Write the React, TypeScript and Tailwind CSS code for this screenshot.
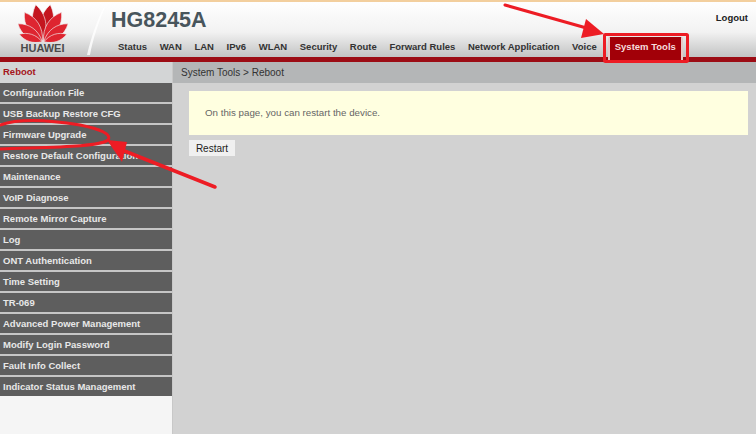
import React from "react";

const tabs = ["Status", "WAN", "LAN", "IPv6", "WLAN", "Security", "Route", "Forward Rules", "Network Application", "Voice"];

const menu = [
  "Configuration File",
  "USB Backup Restore CFG",
  "Firmware Upgrade",
  "Restore Default Configuration",
  "Maintenance",
  "VoIP Diagnose",
  "Remote Mirror Capture",
  "Log",
  "ONT Authentication",
  "Time Setting",
  "TR-069",
  "Advanced Power Management",
  "Modify Login Password",
  "Fault Info Collect",
  "Indicator Status Management",
];

const petals = [
  { a: 11, l: 38, w: 8.5 },
  { a: 32, l: 35, w: 8 },
  { a: 54, l: 31, w: 7 },
  { a: 72, l: 25, w: 5 },
];

const HuaweiLogo = () => (
  <svg width="50" height="39" viewBox="-25 -39 50 39">
    {petals.flatMap((p) =>
      [1, -1].map((s) => (
        <path
          key={p.a * s}
          d={`M0 -1 C${-p.w} ${-p.l * 0.35} ${-p.w} ${-p.l * 0.7} 0 ${-p.l} C${p.w} ${-p.l * 0.7} ${p.w} ${-p.l * 0.35} 0 -1 Z`}
          fill={p.a === 11 ? "#c4161f" : "#de2530"}
          stroke="#f0f0f0"
          strokeWidth="0.6"
          transform={`rotate(${p.a * s})`}
        />
      ))
    )}
  </svg>
);

export default function App() {
  return (
    <div className="relative w-[756px] h-[434px] overflow-hidden bg-[#d2d2d2] font-['Liberation_Sans',Arial,sans-serif]">
      <header className="relative h-[62px] flex flex-col border-t-2 border-[#f3cf9e] bg-gradient-to-b from-white via-[#f2f2f2] to-[#b9baba]">
        <svg className="absolute left-[85px] top-0" width="20" height="55" viewBox="0 0 20 55">
          <path d="M19 5 C12 18 6 36 2 53 L5 53 C8 36 14 20 20 5 Z" fill="#ffffff" opacity="0.8" />
        </svg>
        <div className="flex flex-1">
          <div className="w-[85px] flex flex-col items-center pt-[1px]">
            <HuaweiLogo />
            <span className="text-[11px] leading-[12px] font-bold text-[#4a4a4a]">HUAWEI</span>
          </div>
          <div className="flex-1 flex flex-col">
            <div className="flex justify-between">
              <span className="ml-[26px] mt-[5px] text-[21.5px] leading-[26px] font-bold text-[#48555c]">HG8245A</span>
              <span className="mr-[8px] mt-[9px] text-[9.5px] leading-[14px] font-bold text-[#222]">Logout</span>
            </div>
            <nav className="flex items-center h-[16px] mt-[6px] ml-[33px] gap-[12.6px]">
              {tabs.map((t) => (
                <span key={t} className="shrink-0 text-[9.5px] leading-[14px] font-bold text-[#333] whitespace-nowrap">
                  {t}
                </span>
              ))}
              <span className="relative ml-[-1.5px] w-[75px] h-[24px] shrink-0 mt-[4px] pb-[3px] flex items-center justify-center bg-[#a20008] border-x-2 border-[#e8c8c8] rounded-t-[2px] text-[9.5px] font-bold text-[#f5dcdc]">
                System Tools
              </span>
            </nav>
          </div>
        </div>
        <div className="h-[5px] bg-[#9c0c14]" />
      </header>

      <div className="flex h-[372px]">
        <aside className="w-[173px] h-full bg-[#f5f5f5] border-r border-[#c8c8c8]">
          <div className="h-[21px] flex items-center pl-[3px] bg-[#d3d5d6] text-[9.5px] font-bold text-[#a5161c]">Reboot</div>
          {menu.map((m) => (
            <div
              key={m}
              className="h-[21px] last:h-[19px] flex items-center pl-[3px] pt-px bg-[#5e5e5e] border-b-2 last:border-b-0 border-[#c6c6c6] text-[9.5px] font-bold text-[#e8e8e8] whitespace-nowrap"
            >
              {m}
            </div>
          ))}
        </aside>
        <main className="flex-1">
          <div className="h-[21px] flex items-center pl-[8px] bg-[#b4b6b7] text-[10px] text-[#333]">System Tools &gt; Reboot</div>
          <div className="ml-[16px] mr-[8px] mt-[8px] h-[44px] flex items-center pl-[16px] bg-[#ffffe0] text-[9.75px] text-[#666]">
            On this page, you can restart the device.
          </div>
          <button className="block ml-[16px] mt-[5px] w-[46px] h-[16px] pt-px bg-[#f0f0f0] text-[10px] leading-[16px] text-[#222]">Restart</button>
        </main>
      </div>

      {/* annotations drawn on top of the screenshot */}
      <svg className="absolute inset-0" width="756" height="434" viewBox="0 0 756 434" fill="none">
        <rect x="604.5" y="34.5" width="83" height="27" rx="1" stroke="#ed1c24" strokeWidth="3" />
        <path d="M505 5 L590 29" stroke="#ed1c24" strokeWidth="3" strokeLinecap="round" />
        <path d="M604 34 L586 19 L581 38 Z" fill="#ed1c24" />
        <path d="M215 187 L122 150" stroke="#ed1c24" strokeWidth="3.5" strokeLinecap="round" />
        <path d="M107 140 L127 142 L122 162 Z" fill="#ed1c24" />
        <path d="M0 125 C20 118 50 120 80 125 C100 129 112 134 108 140 C100 147 50 147 0 149" stroke="#ed1c24" strokeWidth="3" strokeLinecap="round" />
      </svg>
    </div>
  );
}
